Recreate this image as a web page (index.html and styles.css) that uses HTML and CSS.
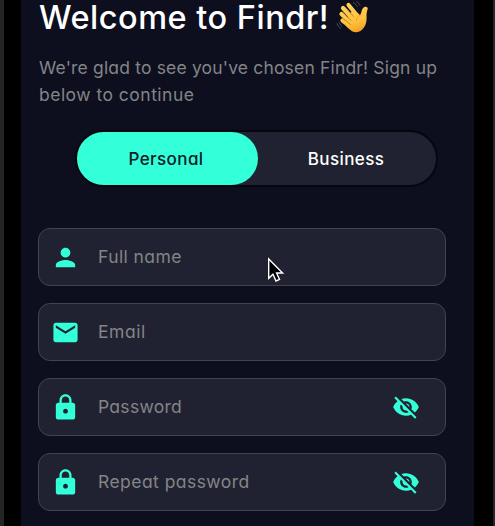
FILE: index.html
```html
<!DOCTYPE html>
<html lang="en">
<head>
<meta charset="utf-8">
<title>Findr – Sign up</title>
<link rel="stylesheet" href="styles.css">
</head>
<body>
<svg class="symbols" width="0" height="0">
  <symbol id="person" viewBox="0 0 24 24"><path d="M12 12c2.21 0 4-1.79 4-4s-1.79-4-4-4-4 1.790-4 4 1.790 4 4 4zm0 2c-2.670 0-8 1.340-8 4v2h16v-2c0-2.660-5.330-4-8-4z"/></symbol>
  <symbol id="mail" viewBox="0 0 24 24"><path d="M20 4H4c-1.100 0-1.990.9-1.990 2L2 18c0 1.100.9 2 2 2h16c1.100 0 2-.9 2-2V6c0-1.100-.9-2-2-2zm0 4l-8 5-8-5V6l8 5 8-5v2z"/></symbol>
  <symbol id="lock" viewBox="0 0 24 24"><path d="M18 8h-1V6c0-2.760-2.240-5-5-5S7 3.240 7 6v2H6c-1.100 0-2 .9-2 2v10c0 1.100.9 2 2 2h12c1.100 0 2-.9 2-2V10c0-1.100-.9-2-2-2zm-6 9c-1.100 0-2-.9-2-2s.9-2 2-2 2 .9 2 2-.9 2-2 2zm3.100-9H8.900V6c0-1.710 1.390-3.100 3.100-3.100s3.100 1.390 3.100 3.100v2z"/></symbol>
  <symbol id="eye-off" viewBox="0 0 24 24"><path d="M12 7c2.760 0 5 2.240 5 5 0 .65-.13 1.260-.36 1.830l2.920 2.920c1.510-1.260 2.700-2.890 3.430-4.750-1.730-4.390-6-7.500-11-7.500-1.400 0-2.740.25-3.980.7l2.160 2.160C10.740 7.130 11.350 7 12 7zM2 4.270l2.280 2.280.46.46C3.080 8.300 1.780 10.020 1 12c1.730 4.390 6 7.500 11 7.500 1.550 0 3.030-.3 4.380-.84l.42.42L19.730 22 21 20.730 3.270 3 2 4.270zM7.530 9.800l1.550 1.550c-.05.21-.08.43-.08.65 0 1.660 1.340 3 3 3 .22 0 .44-.03.65-.08l1.550 1.550c-.67.33-1.410.53-2.200.53-2.760 0-5-2.240-5-5 0-.79.2-1.530.53-2.200zm4.310-.78l3.150 3.150.02-.16c0-1.660-1.340-3-3-3l-.17.01z"/></symbol>
</svg>
<main class="panel">
  <header class="heading">
    <h1><span class="title">Welcome to Findr!</span>
      <svg class="wave" viewBox="0 0 34 34" aria-label="Waving hand">
        <defs><linearGradient id="skin" gradientUnits="userSpaceOnUse" x1="10" y1="3" x2="22" y2="33"><stop offset="0" stop-color="#ffd45c"/><stop offset=".65" stop-color="#ffc23c"/><stop offset="1" stop-color="#f29b20"/></linearGradient></defs>
        <g fill="none" stroke="url(#skin)" stroke-width="4.200" stroke-linecap="round"><path d="M12.500 5l9 11M7 8l10 11M5.500 14l9 9M6.500 20.500l8 6"/></g>
        <path d="M13 14L18 10 24 15C26 13 25 9 28 7.200c2-1.200 4.500 0 3.600 2-1 2.500-1.200 5-1 8.500.3 8-4.500 14-10 14.500-4 .4-7-2.500-11-6.700z" fill="url(#skin)"/>
        <path d="M9.500 7.500l8 9M6.500 12l8.500 8.500M6.500 18l8 6.500" fill="none" stroke="#c57c20" stroke-width=".9" stroke-linecap="round"/>
        <path d="M25 15c-3 .8-5 3-4.500 6" fill="none" stroke="#e89a25" stroke-width=".8"/>
        <path d="M17 2.500c2 .8 3.500 2.300 4.300 4.300M20.500 1.500c1.800.9 3 2.300 3.700 4.200M1 23.500c.7 2.300 2 3.800 4 5M3 22.500c.6 1.700 1.700 3 3.200 4" fill="none" stroke="#5b5d66" stroke-width=".8"/>
      </svg>
    </h1>
    <p><span class="intro-a">We're glad to see you've chosen Findr! Sign up</span><br><span class="intro-b">below to continue</span></p>
  </header>
  <div class="toggle">
    <button class="option active"><span class="t-personal">Personal</span></button>
    <button class="option"><span class="t-business">Business</span></button>
  </div>
  <form class="fields">
    <label class="field"><svg class="icon"><use href="#person"/></svg><span class="t-name">Full name</span></label>
    <label class="field"><svg class="icon"><use href="#mail"/></svg><span class="t-email">Email</span></label>
    <label class="field"><svg class="icon"><use href="#lock"/></svg><span class="t-pass">Password</span><svg class="icon eye"><use href="#eye-off"/></svg></label>
    <label class="field"><svg class="icon"><use href="#lock"/></svg><span class="t-repeat">Repeat password</span><svg class="icon eye"><use href="#eye-off"/></svg></label>
  </form>
</main>
<svg class="cursor" viewBox="0 0 18 26"><path d="M1.700 2v19.300l4.300-4.100 3 6.800 3.500-1.500-2.900-6.500h6z" fill="#000" stroke="#fff" stroke-width="1.400"/></svg>
</body>
</html>
```
FILE: styles.css
```css
* { box-sizing: border-box; }
body {
  margin: 0;
  height: 526px;
  overflow: hidden;
  background: #000;
  border-left: 4px solid #252525;
  border-right: 2px solid #252525;
  font-family: Inter, "Liberation Sans", sans-serif;
  font-feature-settings: "cv11";
}
.symbols { position: absolute; }
.panel {
  width: 453px;
  height: 526px;
  margin-left: 17px;
  padding: 0 28px 0 17px;
  background: #0d0f1f;
}
.heading { height: 130px; padding-left: 1px; }
h1 {
  display: flex;
  margin: 0;
  height: 54px;
  font-size: 32.5px;
  font-weight: 500;
  line-height: 35px;
  color: #fff;
  white-space: nowrap;
}
.title { width: 297px; letter-spacing: .5px; }
.wave { width: 34px; height: 34px; }
p {
  margin: 0;
  padding-top: 1px;
  font-size: 17.500px;
  line-height: 26.500px;
  color: #848487;
  white-space: nowrap;
}
.intro-a { letter-spacing: .17px; }
.intro-b { letter-spacing: .48px; }
.toggle {
  display: flex;
  width: 363px;
  height: 57px;
  margin-left: 37px;
  border: 2px solid #05060e;
  border-radius: 29px;
  background: #202231;
}
.option {
  width: 178px;
  padding: 0 2px 0 0;
  border: 0;
  border-radius: 27px;
  background: none;
  color: #fff;
  font: 500 17px Inter, sans-serif;
  font-feature-settings: "cv11";
}
.option.active {
  width: 181px;
  padding-right: 3px;
  background: #33ffd8;
  color: #0b2028;
}
.t-personal, .t-business { letter-spacing: .4px; }
.fields {
  display: grid;
  gap: 17px;
  margin-top: 41px;
}
.field {
  display: flex;
  align-items: center;
  height: 58px;
  padding: 0 25px 0 12px;
  border: 1px solid #424350;
  border-radius: 12px;
  background: #202231;
  color: #848487;
  font-size: 17.500px;
  white-space: nowrap;
}
.field span { margin-bottom: 2px; }
.t-name { letter-spacing: .42px; }
.t-email { letter-spacing: .55px; }
.t-pass { letter-spacing: .28px; }
.t-repeat { letter-spacing: .45px; }
.icon { width: 29px; height: 29px; margin-right: 18px; fill: #33ffd8; }
.eye { width: 28px; height: 28px; margin: 0 0 0 auto; }
.cursor { position: absolute; left: 267px; top: 257px; width: 18px; height: 26px; }
```
